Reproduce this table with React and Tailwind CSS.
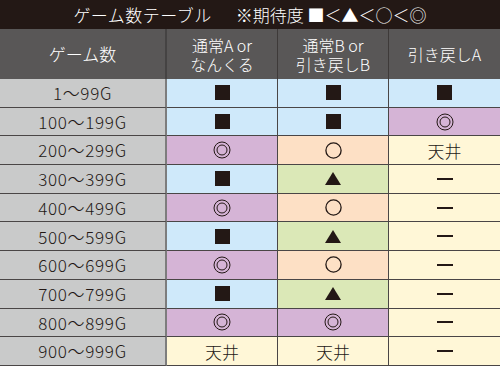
const COLORS = {
  blue: 'bg-[#cfe9fa]',
  purple: 'bg-[#d5b4d6]',
  peach: 'bg-[#fde0c5]',
  green: 'bg-[#dbe8b7]',
  cream: 'bg-[#fff7d7]',
};

// [ゲーム数, [記号, 色] x3]
const rows = [
  ['1～99G', ['■', 'blue'], ['■', 'blue'], ['■', 'blue']],
  ['100～199G', ['■', 'blue'], ['■', 'blue'], ['◎', 'purple']],
  ['200～299G', ['◎', 'purple'], ['○', 'peach'], ['天井', 'cream']],
  ['300～399G', ['■', 'blue'], ['▲', 'green'], ['ー', 'cream']],
  ['400～499G', ['◎', 'purple'], ['○', 'peach'], ['ー', 'cream']],
  ['500～599G', ['■', 'blue'], ['▲', 'green'], ['ー', 'cream']],
  ['600～699G', ['◎', 'purple'], ['○', 'peach'], ['ー', 'cream']],
  ['700～799G', ['■', 'blue'], ['▲', 'green'], ['ー', 'cream']],
  ['800～899G', ['◎', 'purple'], ['◎', 'purple'], ['ー', 'cream']],
  ['900～999G', ['天井', 'cream'], ['天井', 'cream'], ['ー', 'cream']],
];

function Mark({ value }) {
  if (value === '■') return <span className="block w-[15px] h-[15px] bg-[#231815]" />;
  if (value === '▲')
    return (
      <svg width="16" height="13" viewBox="0 0 16 13">
        <polygon points="8,0 16,13 0,13" fill="#231815" />
      </svg>
    );
  if (value === '○')
    return (
      <svg width="17" height="17" viewBox="0 0 17 17">
        <circle cx="8.5" cy="8.5" r="7.6" fill="none" stroke="#231815" strokeWidth="1.3" />
      </svg>
    );
  if (value === '◎')
    return (
      <svg width="18" height="18" viewBox="0 0 18 18">
        <circle cx="9" cy="9" r="8" fill="none" stroke="#231815" strokeWidth="1" />
        <circle cx="9" cy="9" r="5" fill="none" stroke="#231815" strokeWidth="1" />
      </svg>
    );
  if (value === 'ー') return <span className="block w-[16px] h-[2px] bg-[#231815]" />;
  return <span className="text-[17px] leading-none">{value}</span>;
}

export default function App() {
  return (
    <div
      className="w-[500px] h-[367px] bg-white text-[#231815] overflow-hidden font-light"
      style={{ fontFamily: '"Noto Sans CJK JP", "Noto Sans", sans-serif' }}
    >
      {/* タイトル */}
      <div className="h-[29px] bg-[#231815] text-white flex items-center justify-center text-[17px] leading-none">
        <span className="tracking-[0.5px]">ゲーム数テーブル</span>
        <span className="ml-[24px]">※期待度 ■＜▲＜○＜◎</span>
      </div>

      <div className="grid grid-cols-[167px_111px_111px_111px] grid-rows-[50px_repeat(10,28.7px)] border-r border-[#3e3a39]">
        {/* ヘッダー */}
        <div className="bg-[#595757] text-white border-r-2 border-[#454343] flex items-center justify-center text-[17px]">
          ゲーム数
        </div>
        <div className="bg-[#595757] text-white border-r border-[#3e3a39] flex flex-col items-center justify-center text-[16px] leading-[19px] pt-[1px]">
          <span className="leading-[19px]">通常A or</span>
          <span className="leading-[19px]">なんくる</span>
        </div>
        <div className="bg-[#595757] text-white border-r border-[#3e3a39] flex flex-col items-center justify-center text-[16px] leading-[19px] pt-[1px]">
          <span className="leading-[19px]">通常B or</span>
          <span className="leading-[19px]">引き戻しB</span>
        </div>
        <div className="bg-[#595757] text-white flex items-center justify-center text-[16px]">
          引き戻しA
        </div>

        {rows.map(([label, ...cells]) => (
          <div key={label} className="contents">
            <div className="bg-[#c9caca] border-r-2 border-r-[#7d7d7d] border-b-[1.5px] border-b-[#4a4646] flex items-center justify-center text-[17px] tracking-[0.7px]">
              {label}
            </div>
            {cells.map(([mark, color], i) => (
              <div
                key={i}
                className={`${COLORS[color]} ${i < 2 ? 'border-r border-r-[#4a4646]' : ''} border-b-[1.5px] border-b-[#4a4646] flex items-center justify-center`}
              >
                <Mark value={mark} />
              </div>
            ))}
          </div>
        ))}
      </div>
    </div>
  );
}
